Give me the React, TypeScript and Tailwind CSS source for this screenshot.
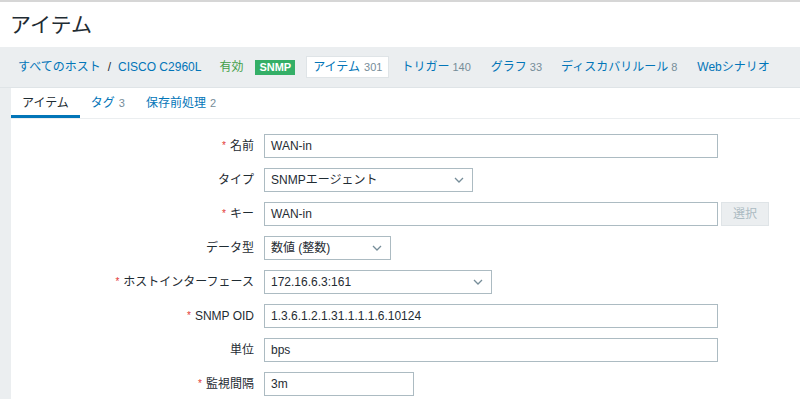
import React from "react";

const FONT = '"Liberation Sans", "Noto Sans CJK JP", sans-serif';

function Chevron() {
    return (
        <svg width="10" height="6" viewBox="0 0 10 6" className="absolute right-[8px] top-1/2 -translate-y-1/2">
            <path d="M1 1 L5 5 L9 1" fill="none" stroke="#768d99" strokeWidth="1.3"/>
        </svg>
    );
}

function Label({text, req}: { text: string; req?: boolean }) {
    return (
        <div className="flex items-center justify-end h-[24px] text-[12px] text-[#1f2c33]">
            {req && <span className="text-[#e33734] mr-[4px] text-[10px] leading-none">*</span>}
            <span>{text}</span>
        </div>
    );
}

function TextBox({value, w}: { value: string; w: string }) {
    return (
        <div className={`${w} h-[24px] border border-[#acbbc2] bg-white flex items-center px-[6px] text-[12px] text-[#1f2c33]`}>
            {value}
        </div>
    );
}

function SelectBox({value, w}: { value: string; w: string }) {
    return (
        <div className={`${w} relative h-[24px] border border-[#acbbc2] bg-white flex items-center px-[6px] text-[12px] text-[#1f2c33]`}>
            {value}
            <Chevron/>
        </div>
    );
}

export default function App() {
    return (
        <div className="w-[800px] h-[399px] overflow-hidden bg-white border-t-2 border-[#d6d6d6]" style={{fontFamily: FONT}}>
            {/* page title */}
            <div className="h-[45px] flex items-center pl-[10px]">
                <h1 className="text-[21px] text-[#1f2c33] font-normal">アイテム</h1>
            </div>

            {/* host breadcrumb / nav */}
            <div className="h-[41px] bg-[#ebeef0] border-b border-[#dfe4e7] flex items-center pl-[18px] text-[12px] whitespace-nowrap">
                <span className="text-[#0275b8]">すべてのホスト</span>
                <span className="ml-[7px] text-[#1f2c33]">/</span>
                <span className="ml-[7px] text-[#0275b8]">CISCO C2960L</span>
                <span className="ml-[18px] text-[#429e47]">有効</span>
                <span className="ml-[12px] bg-[#34af67] text-white font-bold text-[11px] px-[4px] h-[15px] flex items-center leading-none">SNMP</span>
                <span className="ml-[11px] bg-white border border-[#dfe4e7] h-[22px] px-[6px] flex items-center">
                    <span className="text-[#0275b8]">アイテム</span>
                    <span className="ml-[4px] text-[#768d99] text-[11px]">301</span>
                </span>
                <span className="ml-[12px] text-[#0275b8]">トリガー</span>
                <span className="ml-[3px] text-[#768d99] text-[11px]">140</span>
                <span className="ml-[20px] text-[#0275b8]">グラフ</span>
                <span className="ml-[3px] text-[#768d99] text-[11px]">33</span>
                <span className="ml-[19px] text-[#0275b8]">ディスカバリルール</span>
                <span className="ml-[3px] text-[#768d99] text-[11px]">8</span>
                <span className="ml-[20px] text-[#0275b8]">Webシナリオ</span>
            </div>

            <div className="flex h-full">
                <div className="w-[11px] bg-[#ebeef0] shrink-0"/>
                <div className="flex-1 bg-white">
                    {/* tabs */}
                    <div className="h-[31px] border-b border-[#ebeef0] flex text-[12px]">
                        <div className="px-[11px] flex items-center border-b-[3px] border-[#0275b8] text-[#1f2c33] pt-[2px]">アイテム</div>
                        <div className="px-[11px] flex items-center text-[#0275b8]">
                            タグ<span className="ml-[4px] text-[#768d99] text-[11px]">3</span>
                        </div>
                        <div className="px-[10px] flex items-center text-[#0275b8]">
                            保存前処理<span className="ml-[4px] text-[#768d99] text-[11px]">2</span>
                        </div>
                    </div>

                    {/* form */}
                    <div className="grid grid-cols-[243px_1fr] gap-x-[10px] gap-y-[10px] pt-[15px]">
                        <Label text="名前" req/>
                        <TextBox value="WAN-in" w="w-[454px]"/>

                        <Label text="タイプ"/>
                        <SelectBox value="SNMPエージェント" w="w-[209px]"/>

                        <Label text="キー" req/>
                        <div className="flex items-center gap-[3px]">
                            <TextBox value="WAN-in" w="w-[454px]"/>
                            <div className="w-[48px] h-[24px] bg-[#ebeef0] border border-[#dfe4e7] text-[#acbbc2] text-[12px] flex items-center justify-center">選択</div>
                        </div>

                        <Label text="データ型"/>
                        <SelectBox value="数値 (整数)" w="w-[127px]"/>

                        <Label text="ホストインターフェース" req/>
                        <SelectBox value="172.16.6.3:161" w="w-[228px]"/>

                        <Label text="SNMP OID" req/>
                        <TextBox value="1.3.6.1.2.1.31.1.1.1.6.10124" w="w-[454px]"/>

                        <Label text="単位"/>
                        <TextBox value="bps" w="w-[454px]"/>

                        <Label text="監視間隔" req/>
                        <TextBox value="3m" w="w-[150px]"/>
                    </div>
                </div>
            </div>
        </div>
    );
}
